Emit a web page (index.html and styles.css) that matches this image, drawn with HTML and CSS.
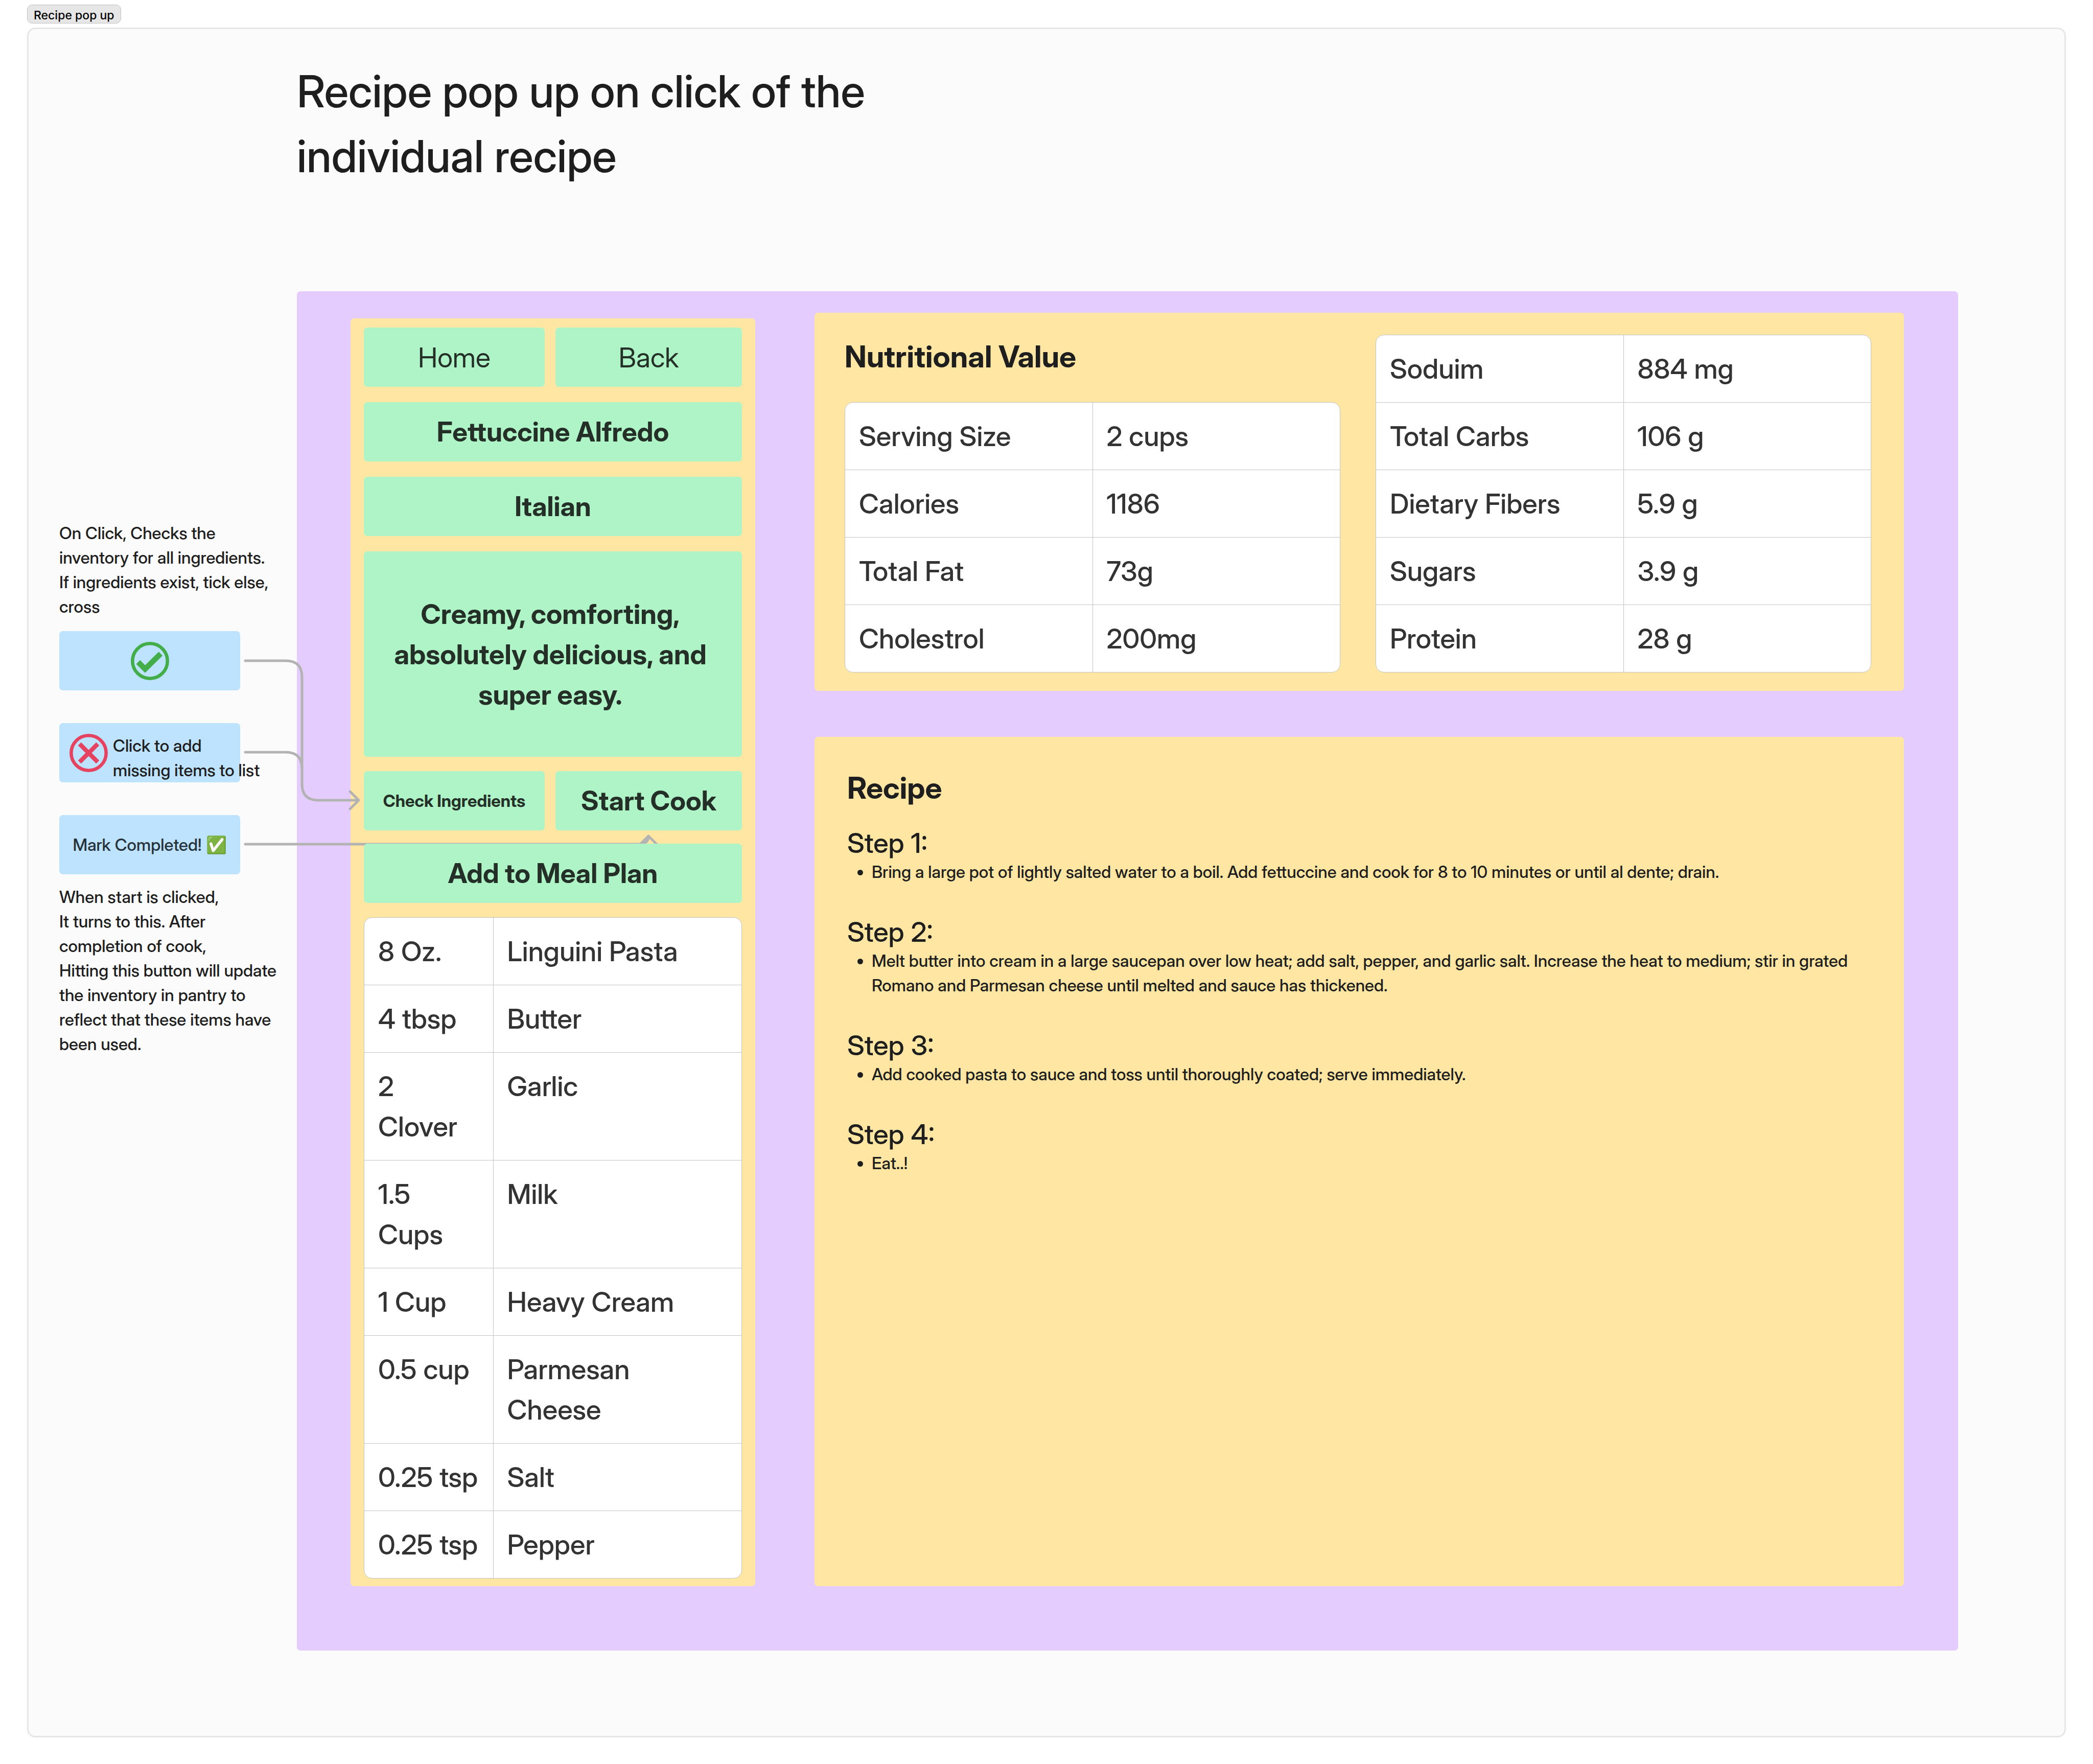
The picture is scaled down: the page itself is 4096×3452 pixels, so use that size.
FILE: index.html
```
<!DOCTYPE html>
<html lang="en">
<head>
<meta charset="utf-8">
<title>Recipe pop up</title>
<link rel="stylesheet" href="styles.css">
</head>
<body>
<div class="label">Recipe pop up</div>
<main class="frame">
  <h1 class="title">Recipe pop up on click of the<br>individual recipe</h1>
  <div class="board">
    <aside class="notes">
      <p class="note">On Click, Checks the<br>inventory for all ingredients.<br>If ingredients exist, tick else,<br>cross</p>
      <div class="states">
        <button class="state" type="button" aria-label="Ingredients available">
          <svg class="mark" viewBox="0 0 114 114" aria-hidden="true"><circle cx="57" cy="57" r="52" fill="none" stroke="#43ae49" stroke-width="10"/><path d="M16 66 27.500 54.500 42.500 69.500 83 29.500 94.500 41 42.500 92.500Z" fill="#43ae49"/></svg>
        </button>
        <button class="state state-missing" type="button">
          <svg class="mark" viewBox="0 0 114 114" aria-hidden="true"><circle cx="57" cy="57" r="52" fill="none" stroke="#e54360" stroke-width="10"/><path d="M30 30 84 84M84 30 30 84" fill="none" stroke="#e54360" stroke-width="13"/></svg>
          <span class="state-text">Click to add<br>missing items to list</span>
        </button>
        <button class="state state-done" type="button">Mark Completed! <span>✅</span></button>
      </div>
      <p class="note">When start is clicked,<br>It turns to this. After<br>completion of cook,<br>Hitting this button will update<br>the inventory in pantry to<br>reflect that these items have<br>been used.</p>
    </aside>
    <section class="popup">
      <div class="card summary">
        <nav class="pair">
          <button class="tile plain" type="button">Home</button>
          <button class="tile plain" type="button">Back</button>
        </nav>
        <h2 class="tile">Fettuccine Alfredo</h2>
        <p class="tile">Italian</p>
        <p class="tile blurb">Creamy, comforting, absolutely delicious, and super easy.</p>
        <div class="pair actions">
          <button class="tile small" type="button">Check Ingredients</button>
          <button class="tile" type="button">Start Cook</button>
        </div>
        <button class="tile meal" type="button">Add to Meal Plan</button>
        <div class="sheet ingredients">
          <table>
            <tr><td>8 Oz.</td><td>Linguini Pasta</td></tr>
            <tr><td>4 tbsp</td><td>Butter</td></tr>
            <tr><td>2<br>Clover</td><td>Garlic</td></tr>
            <tr><td>1.5<br>Cups</td><td>Milk</td></tr>
            <tr><td>1 Cup</td><td>Heavy Cream</td></tr>
            <tr><td>0.5 cup</td><td>Parmesan<br>Cheese</td></tr>
            <tr><td>0.25 tsp</td><td>Salt</td></tr>
            <tr><td>0.25 tsp</td><td>Pepper</td></tr>
          </table>
        </div>
      </div>
      <div class="details">
        <section class="card nutrition">
          <div class="facts">
            <h2 class="heading">Nutritional Value</h2>
            <div class="sheet">
              <table>
                <tr><td>Serving Size</td><td>2 cups</td></tr>
                <tr><td>Calories</td><td>1186</td></tr>
                <tr><td>Total Fat</td><td>73g</td></tr>
                <tr><td>Cholestrol</td><td>200mg</td></tr>
              </table>
            </div>
          </div>
          <div class="facts">
            <div class="sheet">
              <table>
                <tr><td>Soduim</td><td>884 mg</td></tr>
                <tr><td>Total Carbs</td><td>106 g</td></tr>
                <tr><td>Dietary Fibers</td><td>5.9 g</td></tr>
                <tr><td>Sugars</td><td>3.9 g</td></tr>
                <tr><td>Protein</td><td>28 g</td></tr>
              </table>
            </div>
          </div>
        </section>
        <section class="card recipe">
          <h2 class="heading">Recipe</h2>
          <h3 class="step">Step 1:</h3>
          <ul><li>Bring a large pot of lightly salted water to a boil. Add fettuccine and cook for 8 to 10 minutes or until al dente; drain.</li></ul>
          <h3 class="step">Step 2:</h3>
          <ul><li>Melt butter into cream in a large saucepan over low heat; add salt, pepper, and garlic salt. Increase the heat to medium; stir in grated Romano and Parmesan cheese until melted and sauce has thickened.</li></ul>
          <h3 class="step">Step 3:</h3>
          <ul><li>Add cooked pasta to sauce and toss until thoroughly coated; serve immediately.</li></ul>
          <h3 class="step">Step 4:</h3>
          <ul><li>Eat..!</li></ul>
        </section>
      </div>
    </section>
    <svg class="links" viewBox="0 0 1400 1400" aria-hidden="true">
      <g fill="none" stroke="#b3b3b3" stroke-width="5" stroke-linecap="round" stroke-linejoin="round">
        <path d="M364 723H443Q475 723 475 755V964Q475 996 507 996H585"/>
        <path d="M364 902H443Q475 902 475 934"/>
        <path d="M569 979 586 996 569 1013"/>
        <path d="M364 1082H1132Q1153 1082 1153 1067"/>
        <path d="M1136 1083 1153 1066 1170 1083"/>
      </g>
    </svg>
  </div>
</main>
</body>
</html>
```
FILE: styles.css
```
* { box-sizing: border-box; }
body {
  margin: 0;
  padding: 9px 53px 53px;
  background: #fff;
  color: #1e1e1e;
  font: 500 33px/48px "Inter Display", Inter, sans-serif;
}
h1, h2, h3, p, ul { margin: 0; padding: 0; font: inherit; }
button { border: 0; padding: 0; font: inherit; color: inherit; cursor: pointer; }

.label {
  width: fit-content;
  height: 37px;
  margin-bottom: 8px;
  padding: 4px 12px;
  border: 1px solid #c2c2c2;
  border-radius: 10px;
  background: #e6e6e6;
  color: #000;
  font-family: Inter, sans-serif;
  font-size: 23px;
  line-height: 32px;
}
.frame {
  padding: 58px 208px 167px 60px;
  border: 3px solid #e6e6e6;
  border-radius: 16px;
  background: #fbfbfb;
}
.title {
  margin: 0 0 201px 465px;
  font-size: 87px;
  line-height: 127px;
}
.board { position: relative; display: flex; }

.notes { flex: none; width: 465px; padding-top: 449px; }
.note { white-space: nowrap; }
.states { display: grid; grid-template-columns: 354px; gap: 64px; margin: 24px 0 20px; }
.state {
  display: flex;
  align-items: center;
  justify-content: center;
  height: 116px;
  border-radius: 7px;
  background: #bde3ff;
  white-space: nowrap;
}
.mark { flex: none; width: 75px; height: 75px; }
.state-missing { justify-content: flex-start; gap: 10px; padding: 0 20px; text-align: left; }
.state-text { padding-top: 20px; }
.state-done { gap: 8px; color: #26313a; }

.popup {
  flex: 1;
  display: flex;
  gap: 116px;
  padding: 42px 106px 126px 105px;
  border-radius: 7px;
  background: #e4ccff;
}
.card { border-radius: 7px; background: #ffe7a3; }
.summary {
  flex: none;
  width: 792px;
  margin-top: 11px;
  padding: 18px 26px 15px;
  display: flex;
  flex-direction: column;
  gap: 30px;
}
.pair { display: grid; grid-template-columns: 354fr 365fr; gap: 21px; }
.tile {
  display: flex;
  align-items: center;
  justify-content: center;
  height: 116px;
  border-radius: 7px;
  background: #aff4c6;
  color: #242f28;
  font-size: 53px;
  line-height: 79px;
  font-weight: 700;
  text-align: center;
}
.plain { font-size: 54px; font-weight: 400; }
.small { font-size: 33px; }
.blurb { height: 402px; padding: 0 46px 0 36px; font-size: 54px; }
.actions { margin-top: -2px; }
.meal { position: relative; z-index: 2; margin-top: -4px; }

.sheet {
  overflow: hidden;
  border: 1px solid #c4c4c4;
  border-radius: 16px;
  background: #fff;
}
.ingredients { margin-top: -2px; }
table { width: 100%; border-collapse: collapse; table-layout: fixed; }
td {
  padding: 26px 20px 26px 27px;
  border: 1px solid #c4c4c4;
  color: #333;
  font-size: 54px;
  line-height: 79px;
  vertical-align: top;
}
tr:first-child td { border-top: 0; }
tr:last-child td { border-bottom: 0; }
td:first-child { border-left: 0; }
td:last-child { border-right: 0; }
.ingredients td:first-child { width: 252px; }

.details { flex: 1; display: flex; flex-direction: column; gap: 90px; }
.nutrition {
  display: flex;
  align-items: flex-end;
  gap: 69px;
  padding: 42px 64px 36px 59px;
}
.facts { flex: 1; }
.heading { font-size: 59px; line-height: 88px; font-weight: 700; }
.facts .heading { margin-bottom: 45px; }
.recipe { flex: 1; padding: 56px 64px; }
.recipe .heading { margin-bottom: 32px; }
.step { font-size: 54px; line-height: 64px; }
.recipe ul { margin-bottom: 62px; padding-left: 48px; }

.links {
  position: absolute;
  z-index: 1;
  top: 0;
  left: 0;
  width: 1400px;
  height: 1400px;
  pointer-events: none;
}
```
